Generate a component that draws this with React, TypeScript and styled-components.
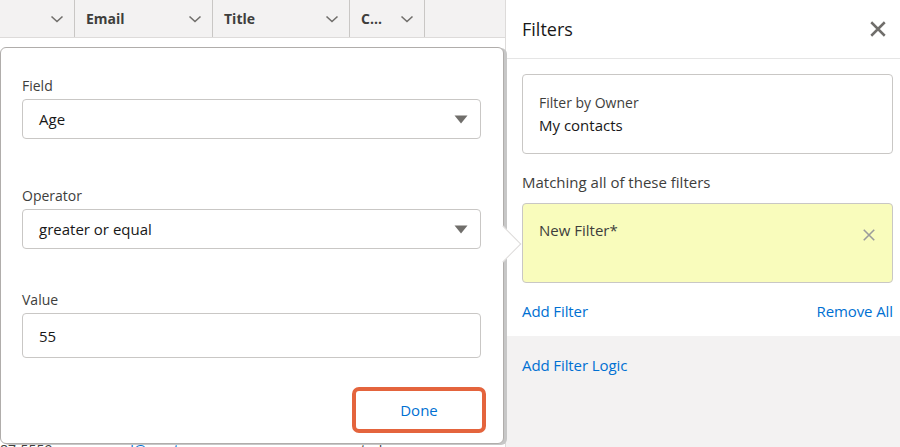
import React from "react";
import styled, { createGlobalStyle } from "styled-components";

const Global = createGlobalStyle`
  html, body { margin: 0; padding: 0; }
  body { font-family: "Open Sans", "Noto Sans", sans-serif; color: #3e3e3c; background: #fff; }
  * { box-sizing: border-box; }
`;

const Page = styled.div`
  width: 900px;
  height: 447px;
  display: flex;
  overflow: hidden;
  position: relative;
`;

const TableArea = styled.div`
  width: 505px;
  flex: none;
  position: relative;
  z-index: 2;
  display: flex;
  flex-direction: column;
  background: #fff;
`;

const HeaderRow = styled.div`
  height: 38px;
  display: flex;
  background: #f3f2f2;
  border-bottom: 1px solid #dddbda;
  flex: none;
`;

const HeadCell = styled.div<{ w: number }>`
  width: ${(p) => p.w}px;
  flex: none;
  display: flex;
  align-items: center;
  justify-content: space-between;
  padding: 0 10px 0 11px;
  border-right: 1px solid #c9c7c5;
  font-weight: 700;
  font-size: 14px;
  color: #3e3e3c;
`;

const HeadFill = styled.div`
  flex: 1;
`;

const Chevron = () => (
  <svg width="14" height="10" viewBox="0 0 14 10">
    <path d="M1.5 2.5 L7 7.5 L12.5 2.5" fill="none" stroke="#706e6b" strokeWidth="1.6" />
  </svg>
);

const Body = styled.div`
  flex: none;
  display: flex;
  flex-direction: column;
`;

const DataRow = styled.div`
  height: 35.8px;
  display: flex;
  align-items: center;
  font-size: 14px;
  flex: none;
`;

const DataCell = styled.div<{ w: number; link?: boolean }>`
  width: ${(p) => p.w}px;
  flex: none;
  padding-left: 11px;
  white-space: nowrap;
  overflow: hidden;
  color: ${(p) => (p.link ? "#0070d2" : "#3e3e3c")};
  text-decoration: ${(p) => (p.link ? "underline" : "none")};
  &:first-child { padding-left: 0; }
`;

const Popover = styled.div`
  position: absolute;
  left: 0;
  top: 47px;
  width: 504px;
  height: 397px;
  background: #fff;
  border: 1px solid #b0adab;
  border-radius: 6px;
  box-shadow: 3px 1px 0 #c7c7c7;
  padding: 28px 22px 0 21px;
  display: flex;
  flex-direction: column;
  z-index: 2;
`;

const Arrow = styled.div`
  position: absolute;
  right: -13px;
  top: 183px;
  width: 26px;
  height: 26px;
  background: #fff;
  border-top: 1px solid #dddbda;
  border-right: 1px solid #dddbda;
  transform: rotate(45deg);
  z-index: 3;
`;

const FieldGroup = styled.div<{ mb: number }>`
  display: flex;
  flex-direction: column;
  margin-bottom: ${(p) => p.mb}px;
`;

const Label = styled.div`
  font-size: 14px;
  line-height: 20px;
  color: #3e3e3c;
  margin-bottom: 3px;
`;

const Box = styled.div<{ h: number }>`
  height: ${(p) => p.h}px;
  border: 1px solid #c9c7c5;
  border-radius: 4px;
  display: flex;
  align-items: center;
  justify-content: space-between;
  padding: 0 12px 0 16px;
  font-size: 15px;
  color: #181818;
`;

const Caret = () => (
  <svg width="14" height="9" viewBox="0 0 14 9">
    <path d="M0.5 0.5 H13.5 L7 8.5 Z" fill="#706e6b" />
  </svg>
);

const Footer = styled.div`
  display: flex;
  justify-content: flex-end;
  margin-top: 29px;
  margin-right: -5px;
`;

const DoneButton = styled.button`
  width: 134px;
  height: 46px;
  border: 4px solid #e4643d;
  border-radius: 7px;
  background: #fff;
  color: #0070d2;
  font-family: inherit;
  font-size: 15px;
  padding: 0;
`;

const Panel = styled.div`
  flex: 1;
  display: flex;
  flex-direction: column;
  border-left: 1px solid #dddbda;
  background: #fff;
  position: relative;
  z-index: 1;
`;

const PanelHeader = styled.div`
  height: 59px;
  flex: none;
  display: flex;
  align-items: center;
  justify-content: space-between;
  padding: 0 13px 0 16px;
  border-bottom: 1px solid #e5e5e5;
  font-size: 18px;
  color: #181818;
`;

const PanelBody = styled.div`
  padding: 15px 7px 0 16px;
  display: flex;
  flex-direction: column;
  background: #fff;
  flex: none;
`;

const Card = styled.div<{ yellow?: boolean }>`
  height: 80px;
  border: 1px solid #c9c7c5;
  border-radius: 4px;
  background: ${(p) => (p.yellow ? "#f9fcbc" : "#fff")};
  padding: ${(p) => (p.yellow ? "14px 16px" : "18px 16px")};
  display: flex;
  justify-content: space-between;
  align-items: flex-start;
`;

const CardText = styled.div`
  display: flex;
  flex-direction: column;
`;

const Small = styled.div`
  font-size: 14px;
  line-height: 20px;
  color: #3e3e3c;
`;

const Value = styled.div<{ muted?: boolean }>`
  font-size: 15px;
  line-height: 24px;
  color: ${(p) => (p.muted ? "#3e3e3c" : "#181818")};
`;

const SectionTitle = styled.div`
  font-size: 15px;
  line-height: 20px;
  color: #3e3e3c;
  margin: 18px 0 11px;
`;

const LinksRow = styled.div`
  display: flex;
  justify-content: space-between;
  padding: 16px 0 13px;
`;

const Link = styled.span`
  color: #0070d2;
  font-size: 15px;
  line-height: 24px;
  letter-spacing: -0.1px;
`;

const PanelFoot = styled.div`
  flex: 1;
  background: #f3f2f2;
  padding: 17px 16px;
`;

const CloseWrap = styled.span<{ mt: number }>`
  display: flex;
  margin-top: ${(p) => p.mt}px;
`;

const XIcon = ({ size, color, w }: { size: number; color: string; w: number }) => (
  <svg width={size} height={size} viewBox="0 0 16 16">
    <path d="M2 2 L14 14 M14 2 L2 14" stroke={color} strokeWidth={w} fill="none" />
  </svg>
);

const rows = [
  ["", "", ""],
  ["", "", ""],
  ["", "", ""],
  ["", "", ""],
  ["", "", ""],
  ["", "", ""],
  ["", "", ""],
  ["", "", ""],
  ["", "", ""],
  ["", "", ""],
  ["", "", ""],
  ["87-5559", "a.wood@wont", "tadm"],
];

export default function App() {
  return (
    <Page>
      <Global />
      <TableArea>
        <HeaderRow>
          <HeadCell w={75}>
            <span />
            <Chevron />
          </HeadCell>
          <HeadCell w={138}>
            <span>Email</span>
            <Chevron />
          </HeadCell>
          <HeadCell w={137}>
            <span>Title</span>
            <Chevron />
          </HeadCell>
          <HeadCell w={75}>
            <span>C...</span>
            <Chevron />
          </HeadCell>
          <HeadFill />
        </HeaderRow>
        <Body>
          {rows.map((r, i) => (
            <DataRow key={i}>
              <DataCell w={75}>{r[0]}</DataCell>
              <DataCell w={275} link>
                {r[1]}
              </DataCell>
              <DataCell w={75}>{r[2]}</DataCell>
            </DataRow>
          ))}
        </Body>
        <Popover>
          <Arrow />
          <FieldGroup mb={47}>
            <Label>Field</Label>
            <Box h={40}>
              <span>Age</span>
              <Caret />
            </Box>
          </FieldGroup>
          <FieldGroup mb={41}>
            <Label>Operator</Label>
            <Box h={40}>
              <span>greater or equal</span>
              <Caret />
            </Box>
          </FieldGroup>
          <FieldGroup mb={0}>
            <Label>Value</Label>
            <Box h={45}>
              <span>55</span>
            </Box>
          </FieldGroup>
          <Footer>
            <DoneButton>Done</DoneButton>
          </Footer>
        </Popover>
      </TableArea>
      <Panel>
        <PanelHeader>
          <span>Filters</span>
          <XIcon size={18} color="#706e6b" w={2.2} />
        </PanelHeader>
        <PanelBody>
          <Card>
            <CardText>
              <Small>Filter by Owner</Small>
              <Value>My contacts</Value>
            </CardText>
          </Card>
          <SectionTitle>Matching all of these filters</SectionTitle>
          <Card yellow>
            <CardText>
              <Value muted>New Filter*</Value>
            </CardText>
            <CloseWrap mt={10}>
              <XIcon size={14} color="#9b9b9b" w={1.8} />
            </CloseWrap>
          </Card>
          <LinksRow>
            <Link>Add Filter</Link>
            <Link>Remove All</Link>
          </LinksRow>
        </PanelBody>
        <PanelFoot>
          <Link>Add Filter Logic</Link>
        </PanelFoot>
      </Panel>
    </Page>
  );
}
